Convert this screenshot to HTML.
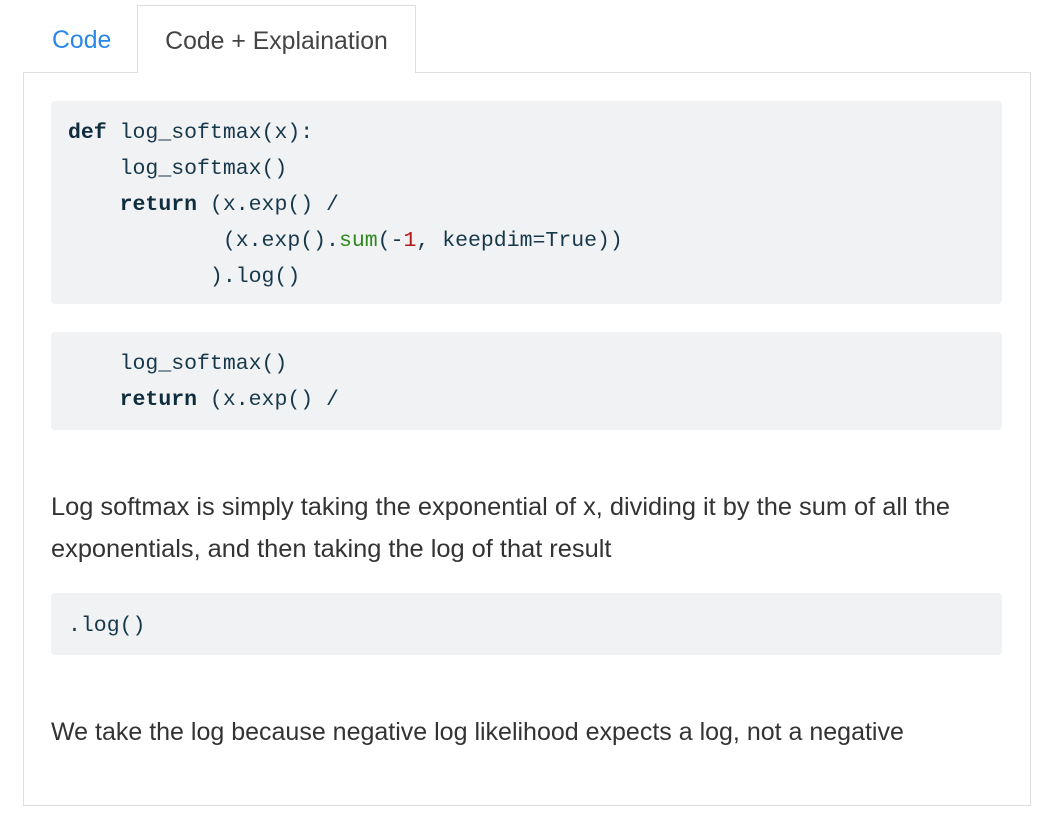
<!DOCTYPE html>
<html><head><style>
body{margin:0;background:#fff;width:1047px;height:820px;position:relative;font-family:"Liberation Sans",sans-serif;overflow:hidden}
.tab{position:absolute;font-size:24.8px;line-height:24px}
#t1{left:52px;top:29px;color:#2a88e8}
#t2{left:137px;top:5px;width:279px;height:68px;border:1px solid #dedede;border-bottom:none;background:#fff;color:#444;box-sizing:border-box;padding-top:24px;text-align:center;z-index:2}
#panel{position:absolute;left:23px;top:72px;width:1008px;height:734px;border:1px solid #dedede;box-sizing:border-box}
pre{position:absolute;left:51px;width:951px;margin:0;background:#f1f2f4;border-radius:4px;font-family:"Liberation Mono",monospace;font-size:21.5px;line-height:36px;color:#17384a;padding:0 0 0 17px;box-sizing:border-box}
b{color:#0f2d3d}
.g{color:#2e8a1e}.r{color:#b31818}
p{position:absolute;left:51px;margin:0;font-size:25.4px;line-height:42px;color:#333;width:980px}
</style></head><body>
<div class="tab" id="t1">Code</div>
<div class="tab" id="t2">Code + Explaination</div>
<div id="panel"></div>
<pre style="top:101px;height:203px;padding-top:14px">
<b>def</b> log_softmax(x):
    log_softmax()
    <b>return</b> (x.exp() /
            (x.exp().<span class="g">sum</span>(-<span class="r">1</span>, keepdim=True))
           ).log()</pre>
<pre style="top:332px;height:98px;padding-top:14px">
    log_softmax()
    <b>return</b> (x.exp() /</pre>
<p style="top:486px">Log softmax is simply taking the exponential of x, dividing it by the sum of all the exponentials, and then taking the log of that result</p>
<pre style="top:593px;height:62px;padding-top:15px">.log()</pre>
<p style="top:711px;font-size:25px">We take the log because negative log likelihood expects a log, not a negative</p>
</body></html>
